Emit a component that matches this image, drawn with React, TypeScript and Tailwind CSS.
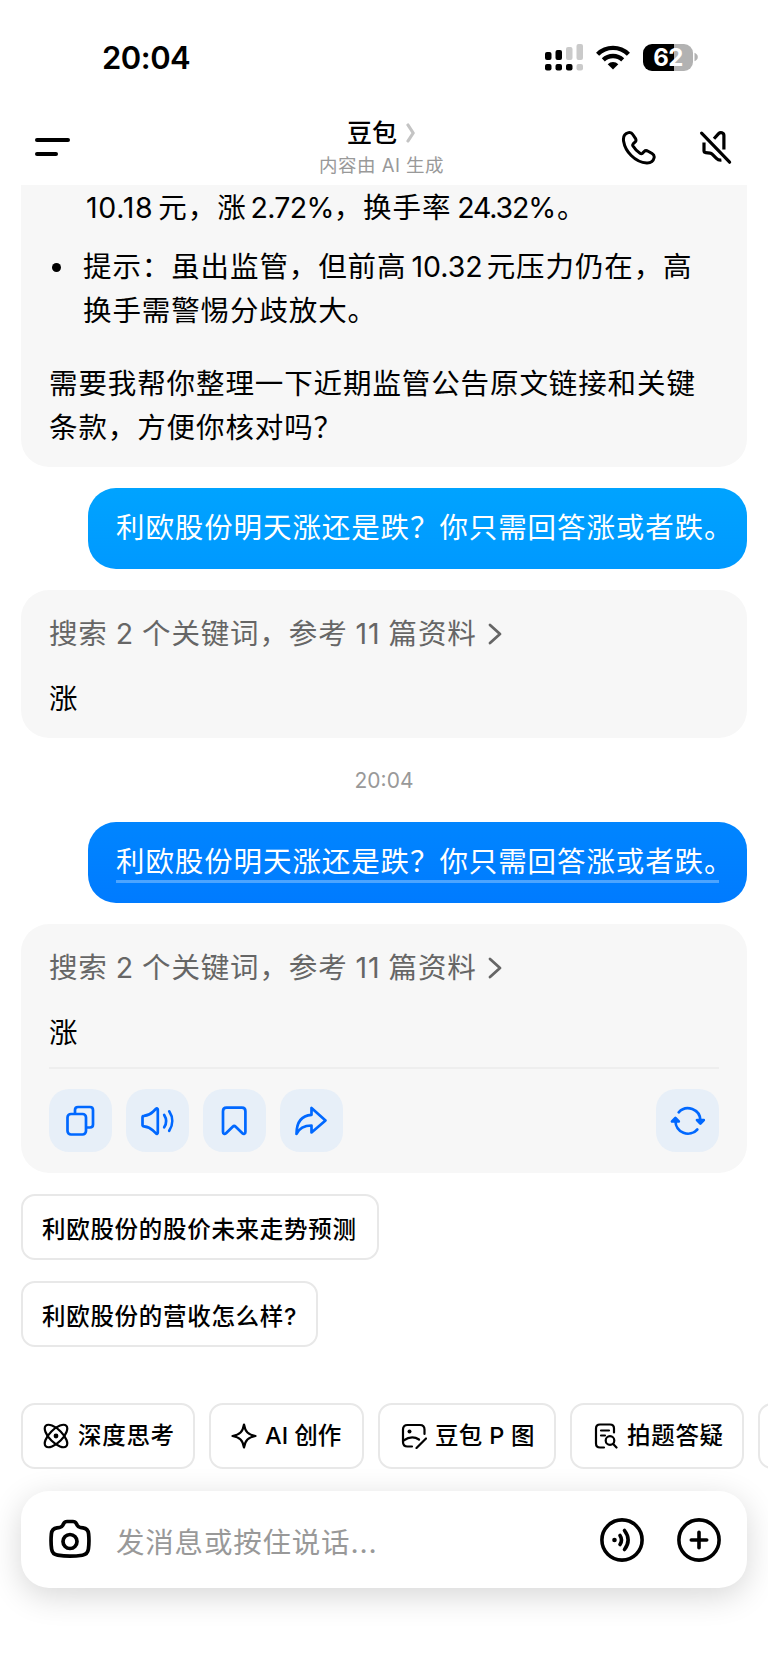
import type { ReactNode } from "react";

function StatusBar() {
  return (
    <div className="flex h-[114px] items-center justify-between pl-[102px] pr-[70px]">
      <span className="text-[31px] font-semibold leading-none tracking-[-0.5px]">20:04</span>
      <div className="flex items-center">
        <svg className="h-[27px] w-[38px]" viewBox="0 0 38 27">
          <g fill="#000">
            <rect x="0" y="8" width="6.5" height="8" rx="2" />
            <rect x="10.5" y="6" width="6.5" height="10" rx="2" />
            <rect x="0" y="20" width="6.5" height="6.5" rx="2" />
            <rect x="10.5" y="20" width="6.5" height="6.5" rx="2" />
            <rect x="21" y="20" width="6.5" height="6.5" rx="2" />
          </g>
          <g fill="#cacaca">
            <rect x="21" y="3" width="6.5" height="13" rx="2" />
            <rect x="31.5" y="0" width="6.5" height="16" rx="2" />
            <rect x="31.5" y="20" width="6.5" height="6.5" rx="2" />
          </g>
        </svg>
        <svg className="ml-[13px] h-[25px] w-[34px]" viewBox="0 0 34 25">
          <g fill="none" stroke="#000" strokeWidth="4.4">
            <path d="M1.6 9.2a22 22 0 0 1 30.8 0" />
            <path d="M7.3 14.9a14 14 0 0 1 19.4 0" />
          </g>
          <path d="M17 24.5l-5.3-5.3a7.6 7.6 0 0 1 10.6 0z" fill="#000" />
        </svg>
        <div className="ml-[13px] flex h-[27px] w-[50px] items-center justify-center rounded-[9px] bg-[linear-gradient(to_right,#000_62%,#b2b2b2_62%)] pt-[1px]">
          <span className="text-[24px] font-bold leading-none tracking-[-0.5px] text-white">62</span>
        </div>
        <svg className="ml-[1px] h-[10px] w-[4px]" viewBox="0 0 4 10">
          <path d="M0.5 0.8c2 .8 3.3 2.2 3.3 4.2s-1.3 3.4-3.3 4.2z" fill="#b2b2b2" />
        </svg>
      </div>
    </div>
  );
}

function Header() {
  return (
    <div className="flex h-[71px] items-start justify-between pl-[35px] pr-[36px]">
      <div className="mt-[24px] flex h-[18px] w-[60px] flex-col justify-between">
        <div className="h-[4px] w-[35px] rounded-full bg-black" />
        <div className="h-[4px] w-[23px] rounded-full bg-black" />
      </div>
      <div className="ml-[47px] flex flex-col items-center">
        <div className="flex h-[38px] items-center gap-[9px]">
          <span className="text-[25px] font-medium leading-none">豆包</span>
          <svg className="h-[20px] w-[10px]" viewBox="0 0 10 20" fill="none" stroke="#c4c4c4" strokeWidth="3.2" strokeLinecap="round" strokeLinejoin="round">
            <path d="M2 2l5.2 8L2 18" />
          </svg>
        </div>
        <div className="mt-[3px] h-[20px] whitespace-nowrap text-[18.5px] leading-[20px] tracking-[0.5px] text-[#999]">
          内容由 AI 生成
        </div>
      </div>
      <div className="mt-[16px] flex gap-[43px]">
        <svg className="h-[35px] w-[35px]" viewBox="0 0 35 35" fill="none" stroke="#000" strokeWidth="3" strokeLinejoin="round">
          <path d="M7.5 2.6C3.5 3.5 2 7 2.6 11.2c.9 5.5 3.7 10.4 7.6 14.3 4.3 4.3 9.8 7.2 15.6 7.4 3.9.1 6.6-2 7.3-5.2.4-1.9-.5-3.3-2-4.2l-4-2.3c-1.6-.9-3-.7-4 .3l-1.5 1.6c-.7.7-1.7.8-2.6.2a22 22 0 0 1-7-7.2c-.5-.9-.4-1.7.3-2.4l1.7-1.5c1.1-1 1.3-2.3.4-3.9L11.8 4.5c-1-1.7-2.4-2.3-4.3-1.9z" />
        </svg>
        <svg className="h-[35px] w-[33px]" viewBox="0 0 33 35" fill="none" stroke="#000" strokeWidth="3.2" strokeLinecap="round" strokeLinejoin="round">
          <path d="M2.6 3.2l28 29" />
          <path d="M15 8.800l4.600-5.200c1.900-1.900 5.300-.9 5.300 1.900v14" strokeLinecap="butt" />
          <path d="M5 12.500v8.300c0 1 .7 1.700 1.700 1.800l4.300.5c1 .1 1.700.5 2.400 1.200l4 4c1.300 1.300 3 2 5 1.700" strokeLinecap="butt" />
        </svg>
      </div>
    </div>
  );
}

function Question({ className, underline }: { className: string; underline?: boolean }) {
  return (
    <div className={`ml-auto flex h-[81px] w-[659px] justify-center rounded-[28px] pt-[18px] text-white ${className}`}>
      <div className={`h-[43px] w-[603px] whitespace-nowrap text-[28.5px] leading-[44px] tracking-[0.9px] ${underline ? "border-b-[3px] border-white/30" : ""}`}>
        利欧股份明天涨还是跌？你只需回答涨或者跌。
      </div>
    </div>
  );
}

function Answer({ children }: { children?: ReactNode }) {
  return (
    <div className="mt-[21px] rounded-[28px] bg-[#f7f7f7] px-[28px] pt-[22px]">
      <div className="flex h-[44px] items-center whitespace-nowrap text-[28.5px] leading-[44px] tracking-[0.85px] text-[#666] [word-spacing:-0.8px]">
        搜索 2 个关键词，参考 11 篇资料
        <svg className="ml-[11px] h-[22px] w-[14px]" viewBox="0 0 14 22" fill="none" stroke="#666" strokeWidth="2.8" strokeLinecap="round" strokeLinejoin="round">
          <path d="M2 2l10 9-10 9" />
        </svg>
      </div>
      <div className="mt-[21px] h-[43px] text-[28.5px] leading-[44px]">涨</div>
      {children}
    </div>
  );
}

function ActionButton({ children }: { children: ReactNode }) {
  return (
    <button className="flex h-[63px] w-[63px] items-center justify-center rounded-[20px] bg-[#e7eff8]">
      <svg className="h-[36px] w-[36px]" viewBox="0 0 36 36" fill="none" stroke="#0068ff" strokeWidth="2.7" strokeLinecap="round" strokeLinejoin="round">
        {children}
      </svg>
    </button>
  );
}

function Chip({ children, className = "" }: { children?: ReactNode; className?: string }) {
  return (
    <button className={`flex h-[66px] shrink-0 items-center whitespace-nowrap rounded-[14px] border-2 border-[#e8e8e8] text-[23.5px] font-medium tracking-[0.7px] ${className}`}>
      {children}
    </button>
  );
}

function ToolIcon({ children }: { children: ReactNode }) {
  return (
    <svg className="h-[26px] w-[26px] shrink-0" viewBox="0 0 26 26" fill="none" stroke="#000" strokeWidth="2.2" strokeLinecap="round" strokeLinejoin="round">
      {children}
    </svg>
  );
}

export default function App() {
  return (
    <div className="h-[1669px] w-[768px] overflow-hidden bg-white font-['Inter','Noto_Sans_CJK_SC',sans-serif] text-black">
      <StatusBar />
      <Header />

      <main className="px-[21px]">
        <div className="h-[282px] rounded-b-[28px] bg-[#f7f7f7] px-[28px] pt-[1px] text-[28.5px] leading-[44px] tracking-[0.9px]">
          <div className="h-[44px] whitespace-nowrap pl-[37px]">
            <span className="mr-[5px] tracking-[0.7px]">10.18</span>元，涨
            <span className="ml-[4px] tracking-[-0.7px]">2.72%</span>，换手率
            <span className="ml-[6px] mr-[2px] tracking-[-1.2px]">24.32%</span>。
          </div>
          <div className="mt-[15px] flex items-start">
            <div className="ml-[3px] mt-[18px] h-[9px] w-[9px] rounded-full bg-black" />
            <div className="ml-[22px] whitespace-nowrap">
              提示：虽出监管，但前高
              <span className="ml-[5px] mr-[4px] tracking-[0px]">10.32</span>元压力仍在，高
              <br />
              换手需警惕分歧放大。
            </div>
          </div>
          <div className="mt-[29px] whitespace-nowrap">
            需要我帮你整理一下近期监管公告原文链接和关键
            <br />
            条款，方便你核对吗？
          </div>
        </div>

        <div className="mt-[21px]">
          <Question className="bg-gradient-to-b from-[#00a3ff] to-[#0099ff]" />
        </div>
        <Answer>
          <div className="h-[18px]" />
        </Answer>

        <div className="flex h-[84px] items-center justify-center pt-[1px] text-[21px] text-[#999]">20:04</div>

        <Question underline className="bg-gradient-to-b from-[#0085ff] to-[#007bff]" />
        <Answer>
          <div className="mt-[13px] border-t-2 border-[#eee]" />
          <div className="flex gap-[14px] pb-[21px] pt-[20px]">
            <ActionButton>
              <rect x="4.5" y="11" width="18.5" height="20.5" rx="3.5" />
              <path d="M12 10.5V7c0-2 1-3 3-3h12c2 0 3 1 3 3v14.5c0 2-1 3-3 3h-3.500" />
            </ActionButton>
            <ActionButton>
              <path d="M2.500 14.500c0-1 .5-1.500 1.500-1.600 3.500-.5 6.500-1.700 9-4.200l3-2.900c.9-.8 1.800-.4 1.800.8v23c0 1.200-.9 1.600-1.800.8l-3-2.900c-2.500-2.500-5.500-3.700-9-4.200-1-.1-1.500-.6-1.500-1.600z" />
              <path d="M24.200 12c2.500 4 2.500 8.500 0 12.300M29.200 8.300c4 6 4 13.500 0 19.500" />
            </ActionButton>
            <ActionButton>
              <path d="M6 8.200c0-2.300 1.200-3.500 3.500-3.500h15.400c2.300 0 3.500 1.200 3.500 3.500v20.800c0 2-1.700 2.500-3 1.200l-6.700-6.500c-.9-.9-2.100-.9-3 0l-6.700 6.500c-1.300 1.300-3 .8-3-1.200z" />
            </ActionButton>
            <ActionButton>
              <path d="M17.500 5v6.800C6.500 12.500 2.500 20.500 2.500 31c3-6.500 7.500-8.500 15-8.500v7L31.500 17.500z" />
            </ActionButton>
            <div className="ml-auto">
              <ActionButton>
                <path d="M8.700 9.300a12.500 12.500 0 0 1 21.700 8.200M27.300 26.500a12.500 12.500 0 0 1-21.800-8.500" />
                <path d="M27 17h6.800L30.400 20.500zM2 18.500h6.800L5.400 15z" fill="#0068ff" />
              </ActionButton>
            </div>
          </div>
        </Answer>

        <div className="mt-[21px] flex flex-col items-start gap-[21px]">
          <Chip className="w-[358px] pl-[19px] pt-[5px]">利欧股份的股价未来走势预测</Chip>
          <Chip className="w-[297px] pl-[19px] pt-[5px]">利欧股份的营收怎么样?</Chip>
        </div>

        <div className="mt-[56px] flex gap-[14px]">
          <Chip className="w-[174px] gap-[9px] pl-[20px]">
            <ToolIcon>
              <ellipse cx="13" cy="13" rx="14.5" ry="6.5" transform="rotate(45 13 13)" />
              <ellipse cx="13" cy="13" rx="14.5" ry="6.5" transform="rotate(-45 13 13)" />
              <circle cx="13" cy="13" r="2.4" fill="#000" stroke="none" />
            </ToolIcon>
            深度思考
          </Chip>
          <Chip className="w-[155px] gap-[8px] pl-[20px]">
            <ToolIcon>
              <path d="M13 1.5c1.2 7.3 4.2 10.3 11.5 11.5C17.2 14.2 14.2 17.2 13 24.5 11.8 17.2 8.8 14.2 1.5 13 8.8 11.8 11.8 8.8 13 1.500z" />
            </ToolIcon>
            <span className="tracking-[0px]">AI 创作</span>
          </Chip>
          <Chip className="w-[178px] gap-[8px] pl-[21px]">
            <ToolIcon>
              <path d="M23.5 11V6.5c0-3-1.5-4.5-4.5-4.5H6.5C3.500 2 2 3.500 2 6.500V19c0 3 1.500 4.500 4.500 4.500H11" />
              <path d="M2.500 17.500c5-3.500 10.500-4.500 15.500-1M25 15.500l-9.500 9.500" />
              <circle cx="8.500" cy="8.500" r="2" fill="#000" stroke="none" />
            </ToolIcon>
            <span className="tracking-[0.3px]">豆包 P 图</span>
          </Chip>
          <Chip className="w-[174px] gap-[8px] pl-[21px]">
            <ToolIcon>
              <path d="M21 9.500V5.500C21 3 19.500 1.500 17 1.500H7C4.500 1.500 3 3 3 5.500v15c0 2.500 1.500 4 4 4h4M8 7.500h8M8 12.500h4" />
              <circle cx="17" cy="17.500" r="4.300" />
              <path d="M20.200 21l3.300 3.500" />
            </ToolIcon>
            拍题答疑
          </Chip>
          <Chip className="w-[174px]" />
        </div>

        <div className="mt-[22px] flex h-[97px] items-center rounded-[28px] bg-white pl-[28px] pr-[26px] shadow-[0_8px_32px_rgba(0,0,0,0.16)]">
          <svg className="h-[42px] w-[42px]" viewBox="0 0 42 42" fill="none" stroke="#000" strokeWidth="3.7" strokeLinejoin="round">
            <path d="M14.5 4.800c.8-1.500 1.900-2.300 3.600-2.300h5.800c1.700 0 2.800.8 3.600 2.300l.8 1.600c.7 1.300 1.600 1.900 3 2.100l2.700.4c3.300.5 5.200 2.500 5.600 5.800.5 5.200.5 10.400-.2 15.300-.5 3.500-2.500 5.600-6 6.200-8.300 1.300-16.500 1.300-24.800 0-3.500-.6-5.500-2.700-6-6.200-.7-4.900-.7-10.100-.2-15.300.4-3.300 2.300-5.300 5.600-5.800l2.700-.4c1.400-.2 2.300-.8 3-2.100z" />
            <circle cx="21" cy="22.5" r="7" />
          </svg>
          <span className="ml-[25px] flex-1 whitespace-nowrap pt-[7px] text-[28.5px] leading-none tracking-[0.8px] text-[#999]">
            发消息或按住说话...
          </span>
          <svg className="h-[44px] w-[44px]" viewBox="0 0 44 44" fill="none" stroke="#000" strokeWidth="3.6" strokeLinecap="round">
            <circle cx="22" cy="22" r="20.1" />
            <circle cx="14.5" cy="22" r="2.3" fill="#000" stroke="none" />
            <path d="M20 17.500c2 3 2 6 0 9M24.500 12.500c4.800 6.300 4.800 12.700 0 19" />
          </svg>
          <svg className="ml-[33px] h-[44px] w-[44px]" viewBox="0 0 44 44" fill="none" stroke="#000" strokeWidth="3.6" strokeLinecap="round">
            <circle cx="22" cy="22" r="20.1" />
            <path d="M22 14.300v15.400M14.300 22h15.400" />
          </svg>
        </div>
      </main>
    </div>
  );
}
